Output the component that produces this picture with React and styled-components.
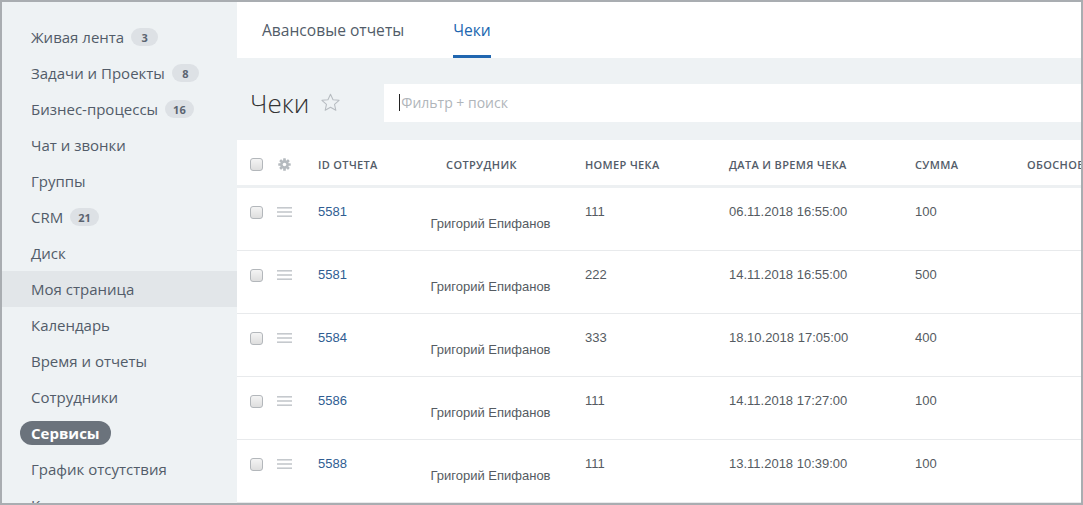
import React from 'react';
import styled, { createGlobalStyle } from 'styled-components';

const GlobalStyle = createGlobalStyle`
  html, body { margin: 0; padding: 0; background: #ffffff; }
  * { box-sizing: border-box; }
`;

const Frame = styled.div`
  width: 1083px;
  height: 505px;
  border: 2px solid #a9adb1;
  display: flex;
  overflow: hidden;
  font-family: "Open Sans", "Liberation Sans", sans-serif;
`;

const Sidebar = styled.nav`
  width: 235px;
  flex-shrink: 0;
  background: #eef2f4;
  padding-top: 17px;
  display: flex;
  flex-direction: column;
`;

const MenuItem = styled.div`
  height: 36px;
  flex-shrink: 0;
  display: flex;
  align-items: center;
  padding-left: 29px;
  font-size: 15px;
  color: #525c69;
  background: ${(p) => (p.$hover ? '#e2e6e9' : 'transparent')};
  white-space: nowrap;
`;

const Pill = styled.span`
  display: inline-flex;
  align-items: center;
  height: 24px;
  padding: 0 11px;
  margin-left: -11px;
  border-radius: 12px;
  background: #6b737c;
  color: #ffffff;
  font-weight: 700;
`;

const Badge = styled.span`
  display: inline-flex;
  align-items: center;
  justify-content: center;
  min-width: 27px;
  height: 18px;
  padding: 0 8px;
  margin-left: 7px;
  border-radius: 9px;
  background: #dde1e5;
  color: #5b6470;
  font-size: 11px;
  font-weight: 700;
`;

const Main = styled.main`
  flex: 1;
  min-width: 0;
  display: flex;
  flex-direction: column;
  background: #ffffff;
`;

const Tabs = styled.div`
  height: 56px;
  flex-shrink: 0;
  display: flex;
  align-items: stretch;
  gap: 49px;
  padding-left: 25px;
  background: #ffffff;
`;

const Tab = styled.div`
  display: flex;
  align-items: center;
  font-size: 15.6px;
  color: ${(p) => (p.$active ? '#2066b0' : '#525c69')};
  border-bottom: 3px solid ${(p) => (p.$active ? '#2066b0' : 'transparent')};
  padding-top: 3px;
`;

const Toolbar = styled.div`
  height: 82px;
  flex-shrink: 0;
  background: #eef2f4;
  display: flex;
  align-items: center;
  padding: 7px 0 0 13px;
`;

const Title = styled.h1`
  margin: 0 11px 0 0;
  font-size: 26px;
  font-weight: 300;
  color: #333333;
`;

const StarIcon = styled.svg`
  width: 21px;
  height: 21px;
  margin-right: 43px;
`;

const Search = styled.div`
  flex: 1;
  height: 38px;
  background: #ffffff;
  display: flex;
  align-items: center;
  padding-left: 15px;
  font-size: 14px;
  color: #b0b5ba;
`;

const Caret = styled.span`
  width: 1px;
  height: 17px;
  background: #222;
  margin-right: 1px;
`;

const Grid = styled.div`
  display: grid;
  flex-shrink: 0;
  grid-template-columns: 33px 48px 92px 175px 144px 186px 112px 200px;
  align-items: ${(p) => (p.$head ? 'center' : 'start')};
  height: ${(p) => (p.$head ? '48px' : '63px')};
  padding-top: ${(p) => (p.$head ? '3px' : '0')};
  border-bottom: ${(p) => (p.$head ? '3px solid #edf0f2' : '1px solid #e8eaec')};
  width: 1000px;
`;

const HeadCell = styled.div`
  font-size: 11px;
  font-weight: 600;
  letter-spacing: 0.35px;
  text-transform: uppercase;
  color: #535c69;
  white-space: nowrap;
  text-align: ${(p) => (p.$center ? 'center' : 'left')};
  padding-right: ${(p) => (p.$center ? '32px' : '0')};
`;

const Cell = styled.div`
  font-family: "Liberation Sans", Arial, sans-serif;
  font-size: 13px;
  line-height: 16px;
  color: ${(p) => (p.$link ? '#2f5d92' : '#555b62')};
  padding-top: ${(p) => (p.$low ? '28px' : '16px')};
  text-align: ${(p) => (p.$center ? 'center' : 'left')};
  padding-right: ${(p) => (p.$center ? '14px' : '0')};
  white-space: nowrap;
`;

const IconCell = styled.div`
  display: flex;
  align-items: center;
  height: 16px;
  margin-top: ${(p) => (p.$head ? '0' : '16px')};
  padding-left: ${(p) => p.$pad || 0}px;
`;

const Check = styled.span`
  width: 13px;
  height: 13px;
  border: 1px solid #b3b7bb;
  border-radius: 3px;
  background: linear-gradient(#f4f4f4, #dedede);
`;

const Gear = () => (
  <svg width="13" height="13" viewBox="0 0 24 24">
    <g fill="#b5babf">
      <circle cx="12" cy="12" r="8" />
      {[0, 45, 90, 135].map((a) => (
        <rect key={a} x="9.5" y="0.5" width="5" height="23" rx="1" transform={`rotate(${a} 12 12)`} />
      ))}
    </g>
    <circle cx="12" cy="12" r="3.3" fill="#ffffff" />
  </svg>
);

const Burger = () => (
  <svg width="15" height="12" viewBox="0 0 15 12">
    <rect x="0" y="1" width="15" height="1.6" fill="#c5c9cd" />
    <rect x="0" y="5.2" width="15" height="1.6" fill="#c5c9cd" />
    <rect x="0" y="9.4" width="15" height="1.6" fill="#c5c9cd" />
  </svg>
);

const menu = [
  { label: 'Живая лента', badge: '3' },
  { label: 'Задачи и Проекты', badge: '8' },
  { label: 'Бизнес-процессы', badge: '16' },
  { label: 'Чат и звонки' },
  { label: 'Группы' },
  { label: 'CRM', badge: '21' },
  { label: 'Диск' },
  { label: 'Моя страница', hover: true },
  { label: 'Календарь' },
  { label: 'Время и отчеты' },
  { label: 'Сотрудники' },
  { label: 'Сервисы', active: true },
  { label: 'График отсутствия' },
  { label: 'Компания' },
];

const rows = [
  { id: '5581', num: '111', date: '06.11.2018 16:55:00', sum: '100' },
  { id: '5581', num: '222', date: '14.11.2018 16:55:00', sum: '500' },
  { id: '5584', num: '333', date: '18.10.2018 17:05:00', sum: '400' },
  { id: '5586', num: '111', date: '14.11.2018 17:27:00', sum: '100' },
  { id: '5588', num: '111', date: '13.11.2018 10:39:00', sum: '100' },
];

export default function App() {
  return (
    <>
      <GlobalStyle />
      <Frame>
        <Sidebar>
          {menu.map((m) => (
            <MenuItem key={m.label} $hover={m.hover}>
              {m.active ? <Pill>{m.label}</Pill> : m.label}
              {m.badge && <Badge>{m.badge}</Badge>}
            </MenuItem>
          ))}
        </Sidebar>
        <Main>
          <Tabs>
            <Tab>Авансовые отчеты</Tab>
            <Tab $active>Чеки</Tab>
          </Tabs>
          <Toolbar>
            <Title>Чеки</Title>
            <StarIcon viewBox="0 0 24 24">
              <path
                d="M12 2.5l2.9 6.3 6.9.7-5.2 4.6 1.5 6.8L12 17.4l-6.1 3.5 1.5-6.8-5.2-4.6 6.9-.7z"
                fill="none"
                stroke="#b7bcc1"
                strokeWidth="1.2"
                strokeLinejoin="round"
              />
            </StarIcon>
            <Search>
              <Caret />
              Фильтр + поиск
            </Search>
          </Toolbar>
          <Grid $head>
            <IconCell $head $pad={13}><Check /></IconCell>
            <IconCell $head $pad={8}><Gear /></IconCell>
            <HeadCell>ID отчета</HeadCell>
            <HeadCell $center>Сотрудник</HeadCell>
            <HeadCell>Номер чека</HeadCell>
            <HeadCell>Дата и время чека</HeadCell>
            <HeadCell>Сумма</HeadCell>
            <HeadCell>Обоснование</HeadCell>
          </Grid>
          {rows.map((r, i) => (
            <Grid key={i}>
              <IconCell $pad={13}><Check /></IconCell>
              <IconCell $pad={7}><Burger /></IconCell>
              <Cell $link>{r.id}</Cell>
              <Cell $center $low>Григорий Епифанов</Cell>
              <Cell>{r.num}</Cell>
              <Cell>{r.date}</Cell>
              <Cell>{r.sum}</Cell>
              <Cell />
            </Grid>
          ))}
        </Main>
      </Frame>
    </>
  );
}
